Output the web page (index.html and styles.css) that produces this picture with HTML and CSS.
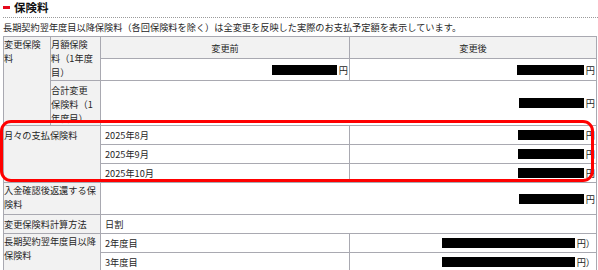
FILE: index.html
```html
<!DOCTYPE html>
<html lang="ja">
<head>
<meta charset="utf-8">
<title>保険料</title>
<link rel="stylesheet" href="styles.css">
</head>
<body>
<div class="page">
  <div class="title"><span class="mark"></span><h2>保険料</h2></div>
  <p class="note">長期契約翌年度目以降保険料（各回保険料を除く）は全変更を反映した実際のお支払予定額を表示しています。</p>
  <table class="grid">
    <colgroup><col class="c1"><col class="c2"><col class="c3"><col class="c4"></colgroup>
    <tr class="r22">
      <th class="lbl" rowspan="3">変更保険<br>料</th>
      <th class="lbl2" rowspan="2">月額保険<br>料（1年度<br>目）</th>
      <th class="head">変更前</th>
      <th class="head">変更後</th>
    </tr>
    <tr class="r22">
      <td class="amt"><span class="mask w65"></span>円</td>
      <td class="amt"><span class="mask w67"></span>円</td>
    </tr>
    <tr class="r44">
      <th class="lbl2 low">合計変更<br>保険料（1<br>年度目）</th>
      <td class="amt" colspan="2"><span class="mask w65"></span>円</td>
    </tr>
    <tr class="r19">
      <th class="lbl low" colspan="2" rowspan="3">月々の支払保険料</th>
      <td class="txt">2025年8月</td>
      <td class="amt"><span class="mask w66"></span>円</td>
    </tr>
    <tr class="r19">
      <td class="txt">2025年9月</td>
      <td class="amt"><span class="mask w66"></span>円</td>
    </tr>
    <tr class="r19">
      <td class="txt">2025年10月</td>
      <td class="amt"><span class="mask w66"></span>円</td>
    </tr>
    <tr class="r32">
      <th class="lbl" colspan="2">入金確認後返還する保<br>険料</th>
      <td class="amt" colspan="2"><span class="mask w65"></span>円</td>
    </tr>
    <tr class="r19">
      <th class="lbl mid" colspan="2">変更保険料計算方法</th>
      <td class="txt" colspan="2">日割</td>
    </tr>
    <tr class="r19">
      <th class="lbl" colspan="2" rowspan="2">長期契約翌年度目以降<br>保険料</th>
      <td class="txt">2年度目</td>
      <td class="amt"><span class="mask w133"></span>円）</td>
    </tr>
    <tr class="r19">
      <td class="txt">3年度目</td>
      <td class="amt"><span class="mask w133"></span>円）</td>
    </tr>
  </table>
  <div class="highlight"></div>
</div>
</body>
</html>
```
FILE: styles.css
```css
html, body {
  margin: 0;
  padding: 0;
  background: #ffffff;
}
.page {
  position: relative;
  width: 598px;
  height: 270px;
  overflow: hidden;
  padding-left: 3px;
  box-sizing: border-box;
  font-family: "Noto Sans CJK JP", "Noto Sans", sans-serif;
  color: #262626;
}
.title {
  display: flex;
  align-items: center;
  gap: 4px;
  height: 18px;
  box-sizing: border-box;
  padding-bottom: 3px;
  border-bottom: 1px dotted #9a9a9a;
}
.mark {
  display: block;
  width: 7px;
  height: 3px;
  background: #e5081c;
}
.title h2 {
  margin: 0;
  font-size: 11.5px;
  line-height: 14px;
  font-weight: bold;
  color: #111;
}
.note {
  margin: 2px 0 2px;
  font-size: 9.2px;
  line-height: 14px;
  white-space: nowrap;
}
.grid {
  width: 593px;
  table-layout: fixed;
  border-collapse: collapse;
  font-size: 9.2px;
  line-height: 14px;
}
.c1 { width: 47px; }
.c2 { width: 50px; }
.c3 { width: 249px; }
.c4 { width: 247px; }
.grid th, .grid td {
  border: 1px solid #a9a9b1;
  padding: 0;
}
.grid th {
  font-weight: normal;
  text-align: left;
  vertical-align: top;
  background: #f2f2f2;
  white-space: nowrap;
}
.lbl { padding: 1px 2px 0 2px; }
.lbl2 { padding: 1px 3px 0 3px; }
.grid th.low { padding-top: 2px; }
.grid th.mid { vertical-align: middle; }
.grid th.head {
  text-align: center;
  vertical-align: middle;
}
.r22 { height: 22px; }
.r44 { height: 44px; }
.r19 { height: 19px; }
.r32 { height: 32px; }
.grid td.txt {
  padding: 0 4px;
  vertical-align: middle;
}
.grid td.amt {
  text-align: right;
  vertical-align: middle;
  padding: 0 1px 0 0;
  white-space: nowrap;
}
.mask {
  display: inline-block;
  height: 10px;
  background: #000;
  vertical-align: -1px;
  margin-right: 2px;
}
.w65 { width: 65px; }
.w66 { width: 66px; }
.w67 { width: 67px; }
.w133 { width: 133px; }
.highlight {
  position: absolute;
  left: 0;
  top: 120px;
  width: 594px;
  height: 62px;
  box-sizing: border-box;
  border: 3px solid #ff0000;
  border-radius: 11px;
}
```
